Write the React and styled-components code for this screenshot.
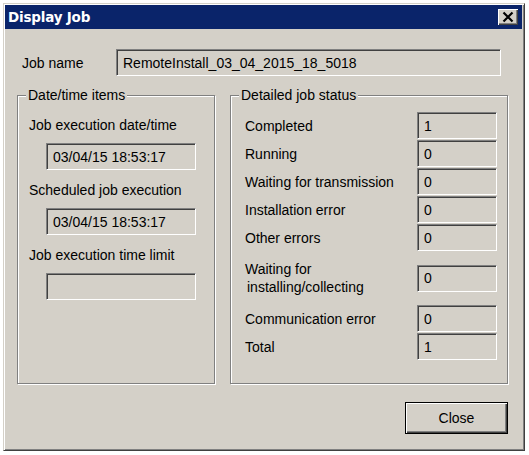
import React from "react";
import { styled, createGlobalStyle } from "styled-components";

const GlobalStyle = createGlobalStyle`
  * { box-sizing: border-box; }
  body {
    margin: 0;
    background: #ffffff;
    font-family: "Liberation Sans", Arial, sans-serif;
    font-size: 14px;
    color: #000;
  }
`;

const statusRows = [
  { label: "Completed", value: "1" },
  { label: "Running", value: "0" },
  { label: "Waiting for transmission", value: "0" },
  { label: "Installation error", value: "0" },
  { label: "Other errors", value: "0" },
  { label: ["Waiting for", "installing/collecting"], value: "0", tall: true },
  { label: "Communication error", value: "0" },
  { label: "Total", value: "1" },
];

const App = () => {
  return (
    <>
      <GlobalStyle />
      <Window>
        <TitleBar>
          <TitleText>Display Job</TitleText>
          <CloseBox aria-label="close">
            <svg width="20" height="16" viewBox="0 0 20 16">
              <path d="M5.5 3.5 L14.5 12.5 M14.5 3.5 L5.5 12.5" stroke="#000" strokeWidth="2.2" />
            </svg>
          </CloseBox>
        </TitleBar>

        <Content>
          <JobRow>
            <JobLabel>Job name</JobLabel>
            <Field $width="385px">RemoteInstall_03_04_2015_18_5018</Field>
          </JobRow>

          <Groups>
            <Group $width="198px" $padLeft="11px">
              <Legend $shift="-3px">Date/time items</Legend>
              <DateList>
                <DateItem>
                  <Label>Job execution date/time</Label>
                  <DateField>03/04/15 18:53:17</DateField>
                </DateItem>
                <DateItem>
                  <Label>Scheduled job execution</Label>
                  <DateField>03/04/15 18:53:17</DateField>
                </DateItem>
                <DateItem>
                  <Label>Job execution time limit</Label>
                  <DateField />
                </DateItem>
              </DateList>
            </Group>

            <Group $width="278px" $padLeft="14px">
              <Legend $shift="-6px">Detailed job status</Legend>
              <StatusList>
                {statusRows.map((row, i) => (
                  <StatusRow key={i} $tall={row.tall}>
                    <Label $tall={row.tall}>
                      {Array.isArray(row.label) ? (
                        <>
                          {row.label[0]}
                          <br />
                          <Indent>{row.label[1]}</Indent>
                        </>
                      ) : (
                        row.label
                      )}
                    </Label>
                    <Field $width="80px">{row.value}</Field>
                  </StatusRow>
                ))}
              </StatusList>
            </Group>
          </Groups>

          <Footer>
            <Button>Close</Button>
          </Footer>
        </Content>
      </Window>
    </>
  );
};

const Window = styled.div`
  margin: 3px;
  width: 522px;
  height: 448px;
  padding: 1px;
  background: #d4d0c8;
  border: 1px solid;
  border-color: #d4d0c8 #404040 #404040 #d4d0c8;
  box-shadow: inset 1px 1px #ffffff, inset -1px -1px #808080;
`;

const TitleBar = styled.div`
  height: 24px;
  width: 517px;
  background: #0a246a;
  display: flex;
  align-items: center;
  justify-content: space-between;
  padding: 0 4px 0 3px;
`;

const TitleText = styled.div`
  font-family: "DejaVu Sans", Tahoma, sans-serif;
  font-weight: bold;
  font-size: 13.5px;
  color: #ffffff;
  letter-spacing: -0.2px;
`;

const CloseBox = styled.div`
  width: 20px;
  height: 16px;
  background: #d4d0c8;
  box-shadow: inset 1px 1px #ffffff, inset -1px -1px #404040, inset -2px -2px #808080;
  display: flex;
`;

const Content = styled.div`
  padding: 20px 15px 0 12px;
`;

const JobRow = styled.div`
  display: flex;
  align-items: center;
  padding-left: 5px;
`;

const JobLabel = styled.div`
  width: 94px;
`;

const Field = styled.div`
  width: ${(p) => p.$width || "150px"};
  height: 27px;
  border: 1px solid;
  border-color: #808080 #ffffff #ffffff #808080;
  box-shadow: inset 1px 1px #404040, inset -1px -1px #d4d0c8;
  background: #d4d0c8;
  display: flex;
  align-items: center;
  padding-left: 6px;
  white-space: nowrap;
`;

const DateField = styled(Field)`
  margin-left: 17px;
  width: 150px;
`;

const Groups = styled.div`
  display: flex;
  gap: 15px;
  margin-top: 12px;
  height: 296px;
`;

const Group = styled.fieldset`
  margin: 0;
  width: ${(p) => p.$width};
  padding: 0 0 0 ${(p) => p.$padLeft};
  border: 1px solid #808080;
  box-shadow: inset 1px 1px #ffffff, 1px 1px #ffffff;
  min-width: 0;
`;

const Legend = styled.legend`
  margin-left: ${(p) => p.$shift};
  padding: 0 2px;
  line-height: 15px;
  background: #d4d0c8;
`;

const DateList = styled.div`
  display: flex;
  flex-direction: column;
  gap: 12px;
  margin-top: 14px;
`;

const DateItem = styled.div`
  display: flex;
  flex-direction: column;
  gap: 10px;
`;

const Label = styled.div`
  line-height: ${(p) => (p.$tall ? "18px" : "16px")};
  white-space: nowrap;
`;

const Indent = styled.span`
  padding-left: 2px;
`;

const StatusList = styled.div`
  display: flex;
  flex-direction: column;
  gap: 1px;
  margin-top: 9px;
`;

const StatusRow = styled.div`
  display: grid;
  grid-template-columns: 172px 80px;
  align-items: center;
  margin: ${(p) => (p.$tall ? "8px 0" : "0")};
`;

const Footer = styled.div`
  display: flex;
  justify-content: flex-end;
  margin-top: 18px;
`;

const Button = styled.div`
  width: 103px;
  height: 32px;
  border: 1px solid #000;
  background: #d4d0c8;
  box-shadow: inset 1px 1px #ffffff, inset -1px -1px #404040, inset -2px -2px #808080;
  display: flex;
  align-items: center;
  justify-content: center;
`;

export default App;
